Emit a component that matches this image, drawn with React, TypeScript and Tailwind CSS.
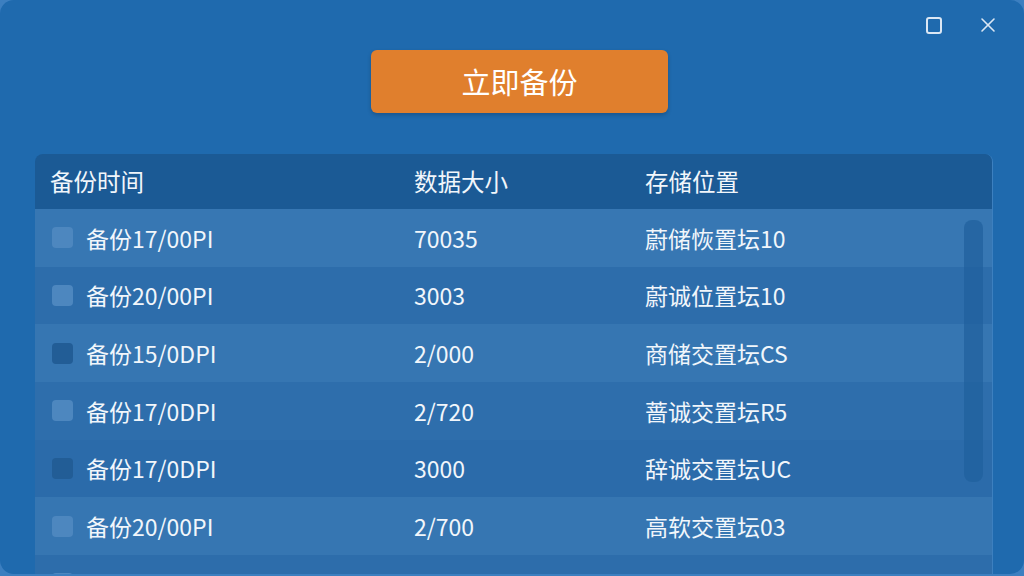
import { X } from 'lucide-react';

interface BackupRow {
  time: string;
  size: string;
  location: string;
  checked: boolean;
}

const rows: BackupRow[] = [
  { time: '备份17/00PI', size: '70035', location: '蔚储恢置坛10', checked: false },
  { time: '备份20/00PI', size: '3003', location: '蔚诚位置坛10', checked: false },
  { time: '备份15/0DPI', size: '2/000', location: '商储交置坛CS', checked: true },
  { time: '备份17/0DPI', size: '2/720', location: '蔷诚交置坛R5', checked: false },
  { time: '备份17/0DPI', size: '3000', location: '辞诚交置坛UC', checked: true },
  { time: '备份20/00PI', size: '2/700', location: '高软交置坛03', checked: false },
  { time: '备份20/00PI', size: '3003', location: '蔚诚交置坛10', checked: false },
];

const rowBg = [
  'bg-[#3777b3]',
  'bg-[#2d6dab]',
  'bg-[#3676b2]',
  'bg-[#2e6eac]',
  'bg-[#2b6baa]',
  'bg-[#3676b2]',
  'bg-[#2d6dab]',
];

export default function App() {
  return (
    <div
      className="w-[1024px] h-[576px] bg-[#3c7fc0] overflow-hidden text-[#f1f6fb]"
      style={{ fontFamily: '"Noto Sans CJK SC", "Noto Sans", sans-serif' }}
    >
      <div className="h-[574px] w-full rounded-[14px] bg-[#1f6aae] overflow-hidden flex flex-col">
        {/* title bar */}
        <div className="h-[50px] flex items-center justify-end pr-[24px] gap-[34px] shrink-0">
          <div className="w-[16px] h-[17px] border-2 border-[#dbe7f4] rounded-[3px]" />
          <X className="w-[24px] h-[24px] text-[#dbe7f4]" strokeWidth={1.6} />
        </div>

        {/* backup button */}
        <div className="flex pl-[371px] shrink-0">
          <button className="w-[297px] h-[63px] rounded-[6px] bg-[#e07f2d] text-[29px] text-white shadow-[0_2px_4px_rgba(0,0,0,0.2)]">
            立即备份
          </button>
        </div>

        {/* table */}
        <div className="relative ml-[35px] mt-[41px] w-[958px] flex-1 rounded-t-[8px] overflow-hidden border-r border-[#3d80bf]">
          <div className="grid grid-cols-[364px_231px_1fr] h-[55px] items-center pl-[15px] bg-[#1b5a95] text-[23.5px]">
            <span>备份时间</span>
            <span>数据大小</span>
            <span>存储位置</span>
          </div>
          {rows.map((r, i) => (
            <div
              key={i}
              className={`grid grid-cols-[364px_231px_1fr] h-[57.7px] items-center pl-[15px] text-[23px] ${rowBg[i]}`}
            >
              <div className="flex items-center gap-[13px] pl-[2px]">
                <span
                  className={`w-[21px] h-[21px] rounded-[4px] ${
                    r.checked ? 'bg-[#225d96]' : 'bg-[#4d87bf]'
                  }`}
                />
                <span>{r.time}</span>
              </div>
              <span>{r.size}</span>
              <span>{r.location}</span>
            </div>
          ))}
          {/* scrollbar */}
          <div className="absolute left-[929px] top-[66px] w-[19px] h-[262px] rounded-[8px] bg-[#1f5f9c]/70" />
        </div>
      </div>
    </div>
  );
}
